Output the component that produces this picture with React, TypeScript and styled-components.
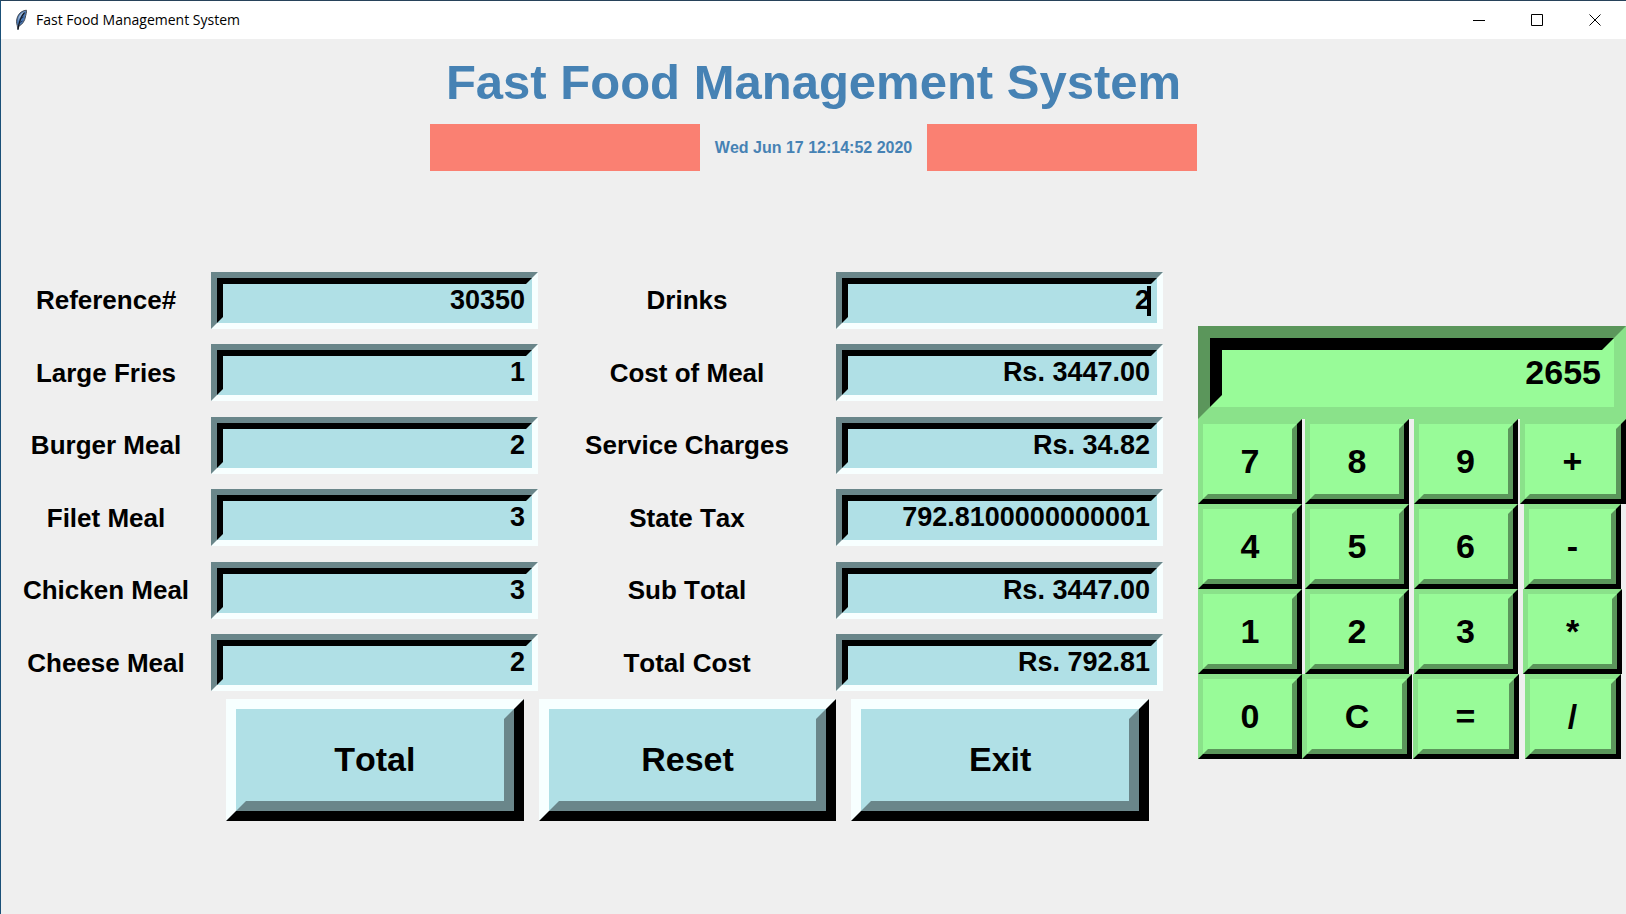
import React, { useState } from "react";
import styled, { createGlobalStyle } from "styled-components";

const powder = { face: "#b0e0e6", light: "#f7ffff", dark: "#6a868a" };
const mint = { face: "#98fb98", light: "#8ae28a", dark: "#5b965b" };

const GlobalStyle = createGlobalStyle`
  * { box-sizing: border-box; }
  body {
    margin: 0;
    background: #efefef;
    font-family: "Liberation Sans", Arial, sans-serif;
    font-kerning: none;
  }
`;

const Window = styled.div`
  min-height: 100vh;
  border-top: 1px solid #27425a;
  border-left: 1px solid #1a5078;
  background: #efefef;
`;

const TitleBar = styled.header`
  display: flex;
  align-items: center;
  height: 38px;
  padding: 0 2px 0 13px;
  background: #fff;
`;

const TitleText = styled.span`
  flex: 1;
  margin-left: 8px;
  font-family: "Open Sans", "Noto Sans", sans-serif;
  font-size: 14px;
  line-height: 20px;
  color: #000;
`;

const WindowButton = styled.button`
  display: flex;
  align-items: center;
  justify-content: center;
  width: 58px;
  height: 38px;
  padding: 0;
  border: 0;
  background: transparent;
`;

const Heading = styled.h1`
  margin: 0;
  padding-top: 13px;
  text-align: center;
  font-size: 49px;
  line-height: 60px;
  font-weight: bold;
  color: #4682b4;
`;

const Banner = styled.div`
  display: flex;
  justify-content: center;
  align-items: center;
  height: 47px;
  margin-top: 12px;
`;

const SalmonBlock = styled.div`
  width: 270px;
  height: 47px;
  background: #fa8072;
`;

const Clock = styled.time`
  width: 227px;
  text-align: center;
  font-size: 16px;
  line-height: 20px;
  font-weight: bold;
  color: #4682b4;
`;

const Main = styled.main`
  display: flex;
  align-items: flex-start;
  gap: 35px;
  margin-top: 93px;
`;

const OrderPanel = styled.form`
  flex: 1;
  min-width: 0;
`;

const FieldGrid = styled.div`
  display: grid;
  grid-template-columns: 210fr 327fr 298fr 327fr;
  grid-auto-rows: 1fr;
  align-items: center;
  min-height: 435px;
`;

const FieldLabel = styled.label`
  text-align: center;
  font-size: 26px;
  line-height: 32px;
  font-weight: bold;
  color: #000;
`;

type Palette = { face: string; light: string; dark: string };

const Sunken = styled.div<{ $palette: Palette; $bevel: number }>`
  position: relative;
  border: ${(p) => p.$bevel}px solid;
  border-color: ${(p) =>
    `${p.$palette.dark} ${p.$palette.light} ${p.$palette.light} ${p.$palette.dark}`};
`;

const Entry = styled.input<{ $palette: Palette; $bevel: number; $size: number; $height: number }>`
  display: block;
  width: 100%;
  height: ${(p) => p.$height}px;
  padding: 0 1px;
  border: ${(p) => p.$bevel}px solid;
  border-color: ${(p) => `#000 ${p.$palette.face} ${p.$palette.face} #000`};
  border-radius: 0;
  outline: none;
  background: ${(p) => p.$palette.face};
  color: #000;
  font-family: inherit;
  font-size: ${(p) => p.$size}px;
  font-weight: bold;
  font-kerning: none;
  text-align: right;
`;

const Caret = styled.span`
  position: absolute;
  top: 8px;
  right: 6px;
  width: 4px;
  height: 30px;
  background: #000;
`;

const Actions = styled.div`
  display: grid;
  grid-template-columns: repeat(3, 1fr);
  gap: 15px;
  padding: 0 14px 0 225px;
`;

const RaisedButton = styled.button<{ $palette: Palette; $bevel: number }>`
  display: block;
  padding: 0;
  border: ${(p) => p.$bevel}px solid;
  border-color: ${(p) => `${p.$palette.light} #000 #000 ${p.$palette.light}`};
  border-radius: 0;
  background: ${(p) => p.$palette.face};
  color: #000;
  font-family: inherit;
  font-size: 34px;
  line-height: 40px;
  font-weight: bold;
  font-kerning: none;
`;

const Face = styled.span<{ $palette: Palette; $bevel: number }>`
  display: flex;
  align-items: center;
  justify-content: center;
  width: 100%;
  height: 100%;
  padding-bottom: 2px;
  border: ${(p) => p.$bevel}px solid;
  border-color: ${(p) =>
    `${p.$palette.face} ${p.$palette.dark} ${p.$palette.dark} ${p.$palette.face}`};
`;

const ActionButton = styled(RaisedButton)`
  height: 122px;
`;

const Calculator = styled.section`
  flex: 0 0 428px;
  margin-top: 62px;
`;

const KeyGrid = styled.div`
  display: grid;
  grid-template-columns: 104fr 110fr 107fr 107fr;
  grid-auto-rows: 85px;
  justify-items: center;
`;

const Key = styled(RaisedButton)<{ $width: number }>`
  width: ${(p) => p.$width}px;
  height: 85px;
`;

const Feather = () => (
  <svg width="14" height="22" viewBox="0 0 14 22" aria-hidden="true">
    <path
      d="M12.4 1.2C8.6 1.4 5 4 3.6 7.6C2.4 10.8 2.2 13.6 3.2 16.4L4 20.6L5 17C8.4 15.6 10.8 11.6 11.4 8C11.8 5.6 12.8 3.4 12.4 1.2Z"
      fill="#4b79b5"
      stroke="#454b55"
      strokeWidth="1"
    />
    <path d="M11.5 2.2C8.4 2.8 5.6 5.2 4.6 8.6L4 12.5C5.5 8.5 8 5 11.5 2.2Z" fill="#a3b8d2" />
    <path d="M10.5 3.5C7 7.5 5 12 4 20.5" fill="none" stroke="#15181f" strokeWidth="1.2" />
    <path d="M9.5 8L7 9.5M8.5 12L6 13.5" stroke="#1c3354" strokeWidth="1" />
  </svg>
);

const ControlIcon = ({ d }: { d: string }) => (
  <svg width="12" height="12" viewBox="0 0 12 12" aria-hidden="true">
    <path d={d} fill="none" stroke="#000" strokeWidth="1" />
  </svg>
);

const rows = [
  ["Reference#", "30350", "Drinks", "2"],
  ["Large Fries", "1", "Cost of Meal", "Rs. 3447.00"],
  ["Burger Meal", "2", "Service Charges", "Rs. 34.82"],
  ["Filet Meal", "3", "State Tax", "792.8100000000001"],
  ["Chicken Meal", "3", "Sub Total", "Rs. 3447.00"],
  ["Cheese Meal", "2", "Total Cost", "Rs. 792.81"],
];

const keys: [string, number][] = [
  ["7", 104], ["8", 104], ["9", 104], ["+", 106],
  ["4", 104], ["5", 104], ["6", 104], ["-", 97],
  ["1", 104], ["2", 104], ["3", 104], ["*", 99],
  ["0", 104], ["C", 110], ["=", 106], ["/", 96],
];

const Field = ({ label, initial }: { label: string; initial: string }) => {
  const [value, setValue] = useState(initial);
  const id = label.toLowerCase().replace(/[^a-z]+/g, "-");
  return (
    <>
      <FieldLabel htmlFor={id}>{label}</FieldLabel>
      <Sunken $palette={powder} $bevel={6}>
        <Entry
          id={id}
          $palette={powder}
          $bevel={6}
          $size={27}
          $height={45}
          value={value}
          onChange={(e) => setValue(e.target.value)}
        />
        {label === "Drinks" && <Caret />}
      </Sunken>
    </>
  );
};

export default function App() {
  const [display, setDisplay] = useState("2655");
  const press = (key: string) => {
    if (key === "C") setDisplay("");
    else if (key !== "=") setDisplay(display + key);
  };

  return (
    <Window>
      <GlobalStyle />
      <TitleBar>
        <Feather />
        <TitleText>Fast Food Management System</TitleText>
        <WindowButton aria-label="Minimize">
          <ControlIcon d="M0 6.5H12" />
        </WindowButton>
        <WindowButton aria-label="Maximize">
          <ControlIcon d="M0.5 0.5H11.5V11.5H0.5Z" />
        </WindowButton>
        <WindowButton aria-label="Close">
          <ControlIcon d="M0.5 0.5L11.5 11.5M11.5 0.5L0.5 11.5" />
        </WindowButton>
      </TitleBar>
      <Heading>Fast Food Management System</Heading>
      <Banner>
        <SalmonBlock />
        <Clock>Wed Jun 17 12:14:52 2020</Clock>
        <SalmonBlock />
      </Banner>
      <Main>
        <OrderPanel onSubmit={(e) => e.preventDefault()}>
          <FieldGrid>
            {rows.map(([left, leftValue, right, rightValue]) => (
              <React.Fragment key={left}>
                <Field label={left} initial={leftValue} />
                <Field label={right} initial={rightValue} />
              </React.Fragment>
            ))}
          </FieldGrid>
          <Actions>
            {["Total", "Reset", "Exit"].map((name) => (
              <ActionButton key={name} type="button" $palette={powder} $bevel={10}>
                <Face $palette={powder} $bevel={10}>{name}</Face>
              </ActionButton>
            ))}
          </Actions>
        </OrderPanel>
        <Calculator>
          <Sunken $palette={mint} $bevel={12}>
            <Entry
              aria-label="Calculator display"
              $palette={mint}
              $bevel={12}
              $size={34}
              $height={69}
              value={display}
              onChange={(e) => setDisplay(e.target.value)}
            />
          </Sunken>
          <KeyGrid>
            {keys.map(([key, width]) => (
              <Key key={key} type="button" $palette={mint} $bevel={5} $width={width} onClick={() => press(key)}>
                <Face $palette={mint} $bevel={5}>{key}</Face>
              </Key>
            ))}
          </KeyGrid>
        </Calculator>
      </Main>
    </Window>
  );
}
